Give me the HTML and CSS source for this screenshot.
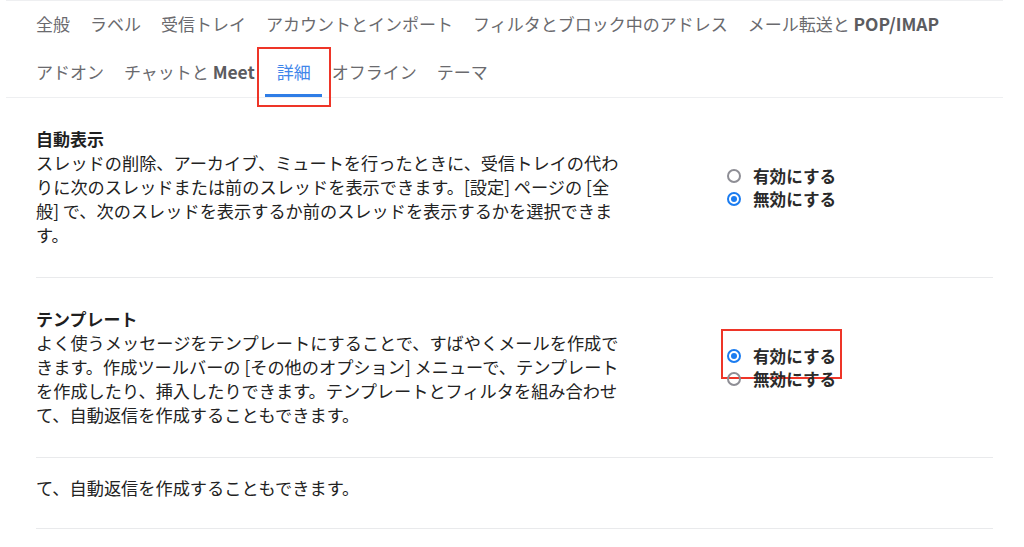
FILE: index.html
```html
<!DOCTYPE html>
<html lang="ja">
<head>
    <meta charset="UTF-8">
    <meta name="viewport" content="width=device-width, initial-scale=1.0">
    <title>設定 - 詳細</title>
    <link rel="stylesheet" href="styles.css">
</head>
<body>
    <div class="settings">
        <!-- タブ -->
        <nav class="tabs">
            <a class="tab">全般</a>
            <a class="tab">ラベル</a>
            <a class="tab">受信トレイ</a>
            <a class="tab">アカウントとインポート</a>
            <a class="tab">フィルタとブロック中のアドレス</a>
            <a class="tab">メール転送と <b class="latin">POP/IMAP</b></a>
            <a class="tab">アドオン</a>
            <a class="tab">チャットと <b class="latin">Meet</b></a>
            <a class="tab active marked">詳細</a>
            <a class="tab">オフライン</a>
            <a class="tab">テーマ</a>
        </nav>

        <!-- 自動表示 -->
        <section class="row">
            <div class="desc">
                <h3 class="title">自動表示</h3>
                <p>スレッドの削除、アーカイブ、ミュートを行ったときに、受信トレイの代わ<br>りに次のスレッドまたは前のスレッドを表示できます。[設定] ページの [全<br>般] で、次のスレッドを表示するか前のスレッドを表示するかを選択できま<br>す。</p>
            </div>
            <div class="options">
                <label class="option"><span class="radio"></span>有効にする</label>
                <label class="option"><span class="radio checked"></span>無効にする</label>
            </div>
        </section>

        <!-- テンプレート -->
        <section class="row">
            <div class="desc">
                <h3 class="title">テンプレート</h3>
                <p>よく使うメッセージをテンプレートにすることで、すばやくメールを作成で<br>きます。作成ツールバーの [その他のオプション] メニューで、テンプレート<br>を作成したり、挿入したりできます。テンプレートとフィルタを組み合わせ<br>て、自動返信を作成することもできます。</p>
            </div>
            <div class="options">
                <label class="option marked"><span class="radio checked"></span>有効にする</label>
                <label class="option"><span class="radio"></span>無効にする</label>
            </div>
        </section>

        <section class="row row-short">
            <p>て、自動返信を作成することもできます。</p>
        </section>
    </div>
</body>
</html>
```

FILE: styles.css
```css
/* 基本 */
body {
    margin: 0;
    background: #fff;
    font-family: "Noto Sans CJK JP", "Noto Sans", sans-serif;
    color: #222;
}

p {
    margin: 0;
}

.settings {
    width: 997px;
    margin-left: 6px;
}

/* タブ */
.tabs {
    display: flex;
    flex-wrap: wrap;
    padding-left: 20px;
    border-top: 1px solid #eeeff1;
    border-bottom: 1px solid #eeeff1;
}

.tab {
    position: relative;
    display: flex;
    align-items: center;
    box-sizing: border-box;
    height: 48px;
    padding: 0 10px;
    border-bottom: 3px solid transparent;
    font-size: 17px;
    color: #6a6a6e;
    white-space: pre;
    cursor: pointer;
}

.tab .latin {
    font-weight: 700;
    font-size: 17.4px;
    color: #5c5c60;
}

.tab.active {
    color: #3f86ea;
    border-bottom-color: #2f7de6;
    padding: 0 11px 0 12px;
}

.tab.marked::after {
    content: "";
    position: absolute;
    top: -2px;
    left: -8px;
    right: -9px;
    bottom: -13px;
    border: 2px solid #ee3528;
}

/* 設定行 */
.row {
    display: flex;
    align-items: center;
    margin: 0 10px 0 30px;
    padding: 29px 0 30px;
    border-bottom: 1px solid #e9eaec;
    font-size: 17.2px;
    line-height: 24px;
}

.row.row-short {
    padding: 18px 0 28px;
}

.desc {
    flex: 0 0 600px;
    margin-right: 91px;
    white-space: nowrap;
}

.title {
    margin: 0;
    font-size: 17px;
    font-weight: 700;
    line-height: 24px;
    color: #1f1f1f;
}

.options {
    display: flex;
    flex-direction: column;
    font-size: 16.6px;
}

.option {
    position: relative;
    display: flex;
    align-items: center;
    height: 23px;
    font-weight: 700;
    color: #2a2a2a;
}

.option.marked::after {
    content: "";
    position: absolute;
    top: -15px;
    left: -6px;
    right: -6px;
    bottom: -12px;
    border: 2px solid #ee3528;
}

.radio {
    box-sizing: border-box;
    width: 14px;
    height: 14px;
    margin-right: 12px;
    border: 2px solid #8e8e95;
    border-radius: 50%;
    position: relative;
}

.radio.checked {
    border-color: #1b7cf0;
}

.radio.checked::before {
    content: "";
    position: absolute;
    top: 2px;
    left: 2px;
    width: 6px;
    height: 6px;
    border-radius: 50%;
    background: #1b7cf0;
}
```
